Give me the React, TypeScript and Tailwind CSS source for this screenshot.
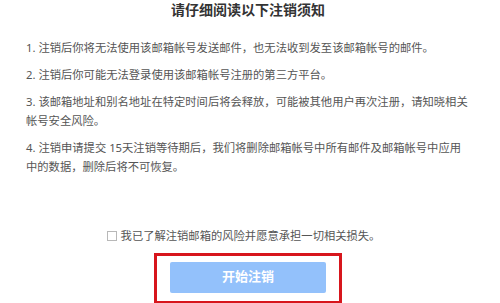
const notices = [
  '1. 注销后你将无法使用该邮箱帐号发送邮件，也无法收到发至该邮箱帐号的邮件。',
  '2. 注销后你可能无法登录使用该邮箱帐号注册的第三方平台。',
  '3. 该邮箱地址和别名地址在特定时间后将会释放，可能被其他用户再次注册，请知晓相关帐号安全风险。',
  '4. 注销申请提交 15天注销等待期后，我们将删除邮箱帐号中所有邮件及邮箱帐号中应用中的数据，删除后将不可恢复。',
];

export default function App() {
  return (
    <div
      className="w-[500px] h-[303px] overflow-hidden bg-white"
      style={{ fontFamily: '"Noto Sans", "Noto Sans CJK SC", sans-serif' }}
    >
      <div className="w-[496px] flex flex-col">
        <h1 className="text-center text-[14px] leading-[20px] font-bold text-[#333333]">
          请仔细阅读以下注销须知
        </h1>

        <div className="mt-[17.5px] pl-[26px] pr-[26px] flex flex-col gap-[8px] text-[11.3px] leading-[19px] text-[#555555]">
          {notices.map((text, idx) => (
            <p key={idx}>{text}</p>
          ))}
        </div>

        <label className="mt-[50.5px] pr-[9px] flex items-center justify-center gap-[4px] text-[11.3px] leading-[19px] text-[#555555]">
          <span className="w-[10px] h-[10px] border border-[#b8b8b8] bg-white"></span>
          <span>我已了解注销邮箱的风险并愿意承担一切相关损失。</span>
        </label>

        <div className="mt-[7.5px] flex justify-center">
          <div className="w-[188px] border-[3px] border-[#d7161d] px-[13px] pt-[6px] pb-[8px]">
            <button className="w-[156px] h-[31px] rounded-[2px] bg-[#93c1fb] text-white text-[13px] font-bold">
              开始注销
            </button>
          </div>
        </div>
      </div>
    </div>
  );
}
